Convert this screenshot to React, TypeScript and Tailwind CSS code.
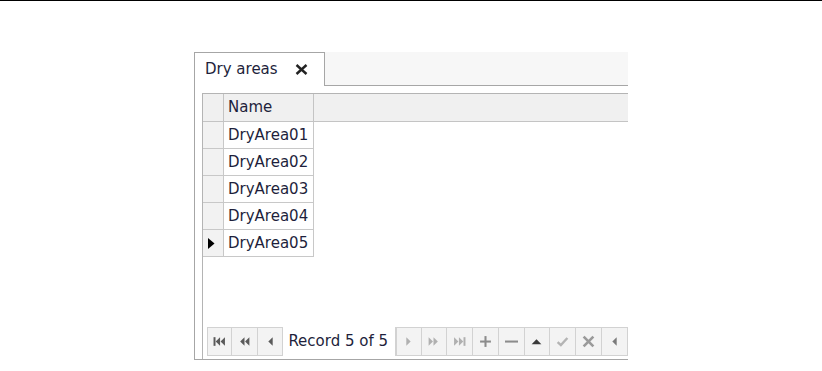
import React from "react";

const rows = ["DryArea01", "DryArea02", "DryArea03", "DryArea04", "DryArea05"];

const NavIcon = ({ kind, color }: { kind: string; color: string }) => {
  const c = color;
  let shape: React.ReactNode = null;
  switch (kind) {
    case "first":
      shape = (
        <>
          <rect x="0.5" y="2" width="1.8" height="8" fill={c} />
          <polygon points="6.5,2 6.5,10 2.5,6" fill={c} />
          <polygon points="11,2 11,10 7,6" fill={c} />
        </>
      );
      break;
    case "prevPage":
      shape = (
        <>
          <polygon points="6,2 6,10 2,6" fill={c} />
          <polygon points="10.5,2 10.5,10 6.5,6" fill={c} />
        </>
      );
      break;
    case "prev":
    case "left":
      shape = <polygon points="8,2 8,10 4,6" fill={c} />;
      break;
    case "next":
      shape = <polygon points="4,2 4,10 8,6" fill={c} />;
      break;
    case "nextPage":
      shape = (
        <>
          <polygon points="1.5,2 1.5,10 5.5,6" fill={c} />
          <polygon points="6,2 6,10 10,6" fill={c} />
        </>
      );
      break;
    case "last":
      shape = (
        <>
          <polygon points="1,2 1,10 5,6" fill={c} />
          <polygon points="5.5,2 5.5,10 9.5,6" fill={c} />
          <rect x="9.7" y="2" width="1.8" height="8" fill={c} />
        </>
      );
      break;
    case "plus":
      shape = (
        <>
          <rect x="1" y="5.1" width="10" height="1.9" fill={c} />
          <rect x="5.05" y="1" width="1.9" height="10" fill={c} />
        </>
      );
      break;
    case "minus":
      shape = <rect x="0" y="5.1" width="12" height="1.9" fill={c} />;
      break;
    case "up":
      shape = <polygon points="1.5,8.5 10.5,8.5 6,4" fill={c} />;
      break;
    case "check":
      shape = <polyline points="1.5,6.5 4.5,9.3 10.5,2.8" fill="none" stroke={c} strokeWidth="2.2" />;
      break;
    case "cross":
      shape = (
        <>
          <line x1="1.5" y1="1.5" x2="10.5" y2="10.5" stroke={c} strokeWidth="2.4" />
          <line x1="10.5" y1="1.5" x2="1.5" y2="10.5" stroke={c} strokeWidth="2.4" />
        </>
      );
      break;
  }
  return (
    <svg width="13" height="13" viewBox="0 0 12 12">
      {shape}
    </svg>
  );
};

const NavButton = ({ kind, color, w }: { kind: string; color: string; w: string }) => (
  <div className={`${w} h-full flex items-center justify-center bg-[#f3f3f3] border border-[#d2d2d2] border-l-0 first:border-l`}>
    <NavIcon kind={kind} color={color} />
  </div>
);

const App: React.FC = () => {
  return (
    <div className="w-[822px] h-[371px] bg-white font-['DejaVu_Sans',sans-serif] text-[15px] text-[#1e1f3c]">
      <div className="h-px bg-black" />
      <div className="ml-[194px] mt-[51px] w-[434px] overflow-hidden">
        {/* tab strip */}
        <div className="flex h-[34px]">
          <div className="w-[131px] flex items-center bg-white border-l border-t border-r border-[#a6a6a6] pl-[10px]">
            <span>Dry areas</span>
            <svg className="ml-[17px]" width="13" height="11" viewBox="0 0 13 11">
              <line x1="1.5" y1="1" x2="11.5" y2="10" stroke="#222" strokeWidth="2.4" />
              <line x1="11.5" y1="1" x2="1.5" y2="10" stroke="#222" strokeWidth="2.4" />
            </svg>
          </div>
          <div className="flex-1 bg-[#f7f7f7] border-b border-[#a6a6a6]" />
        </div>

        {/* content */}
        <div className="h-[274px] flex flex-col border-l border-b border-[#a6a6a6] pl-[7px] pt-[7px]">
          <div className="flex-1 flex flex-col border-l border-t border-[#b4b4b4]">
            <div className="flex h-[28px] bg-[#f0f0f0] border-b border-[#c4c4c4]">
              <div className="w-[21px] border-r border-[#c4c4c4]" />
              <div className="w-[90px] border-r border-[#c4c4c4] flex items-center pl-[4px]">Name</div>
              <div className="flex-1" />
            </div>
            {rows.map((name, i) => (
              <div key={name} className="flex h-[27px] w-[111px] border-b border-[#c8c8c8]">
                <div className="w-[21px] bg-[#f2f2f2] border-r border-[#c8c8c8] flex items-center pl-[5px]">
                  {i === rows.length - 1 && (
                    <svg width="7" height="11" viewBox="0 0 7 11">
                      <polygon points="0,0 0,11 6.5,5.5" fill="#000" />
                    </svg>
                  )}
                </div>
                <div className="w-[90px] bg-white border-r border-[#c8c8c8] flex items-center pl-[4px]">{name}</div>
              </div>
            ))}
            <div className="flex-1" />
            <div className="flex h-[29px] ml-[4px] mb-[3px]">
              <NavButton kind="first" color="#5a5a5a" w="w-[26px]" />
              <NavButton kind="prevPage" color="#5a5a5a" w="w-[26px]" />
              <NavButton kind="prev" color="#5a5a5a" w="w-[26px]" />
              <div className="w-[114px] flex items-center pl-[5px] whitespace-nowrap">Record 5 of 5</div>
              <div className="flex h-full border-l border-[#d2d2d2]">
                <NavButton kind="next" color="#b0b0b0" w="w-[25.5px]" />
                <NavButton kind="nextPage" color="#b0b0b0" w="w-[25.5px]" />
                <NavButton kind="last" color="#b0b0b0" w="w-[26px]" />
                <NavButton kind="plus" color="#8c8c8c" w="w-[26px]" />
                <NavButton kind="minus" color="#8c8c8c" w="w-[25.5px]" />
                <NavButton kind="up" color="#3a3a3a" w="w-[25.5px]" />
                <NavButton kind="check" color="#b4b4b4" w="w-[26px]" />
                <NavButton kind="cross" color="#9a9a9a" w="w-[26px]" />
                <NavButton kind="left" color="#7a7a7a" w="w-[26px]" />
              </div>
            </div>
          </div>
        </div>
      </div>
    </div>
  );
};

export default App;
